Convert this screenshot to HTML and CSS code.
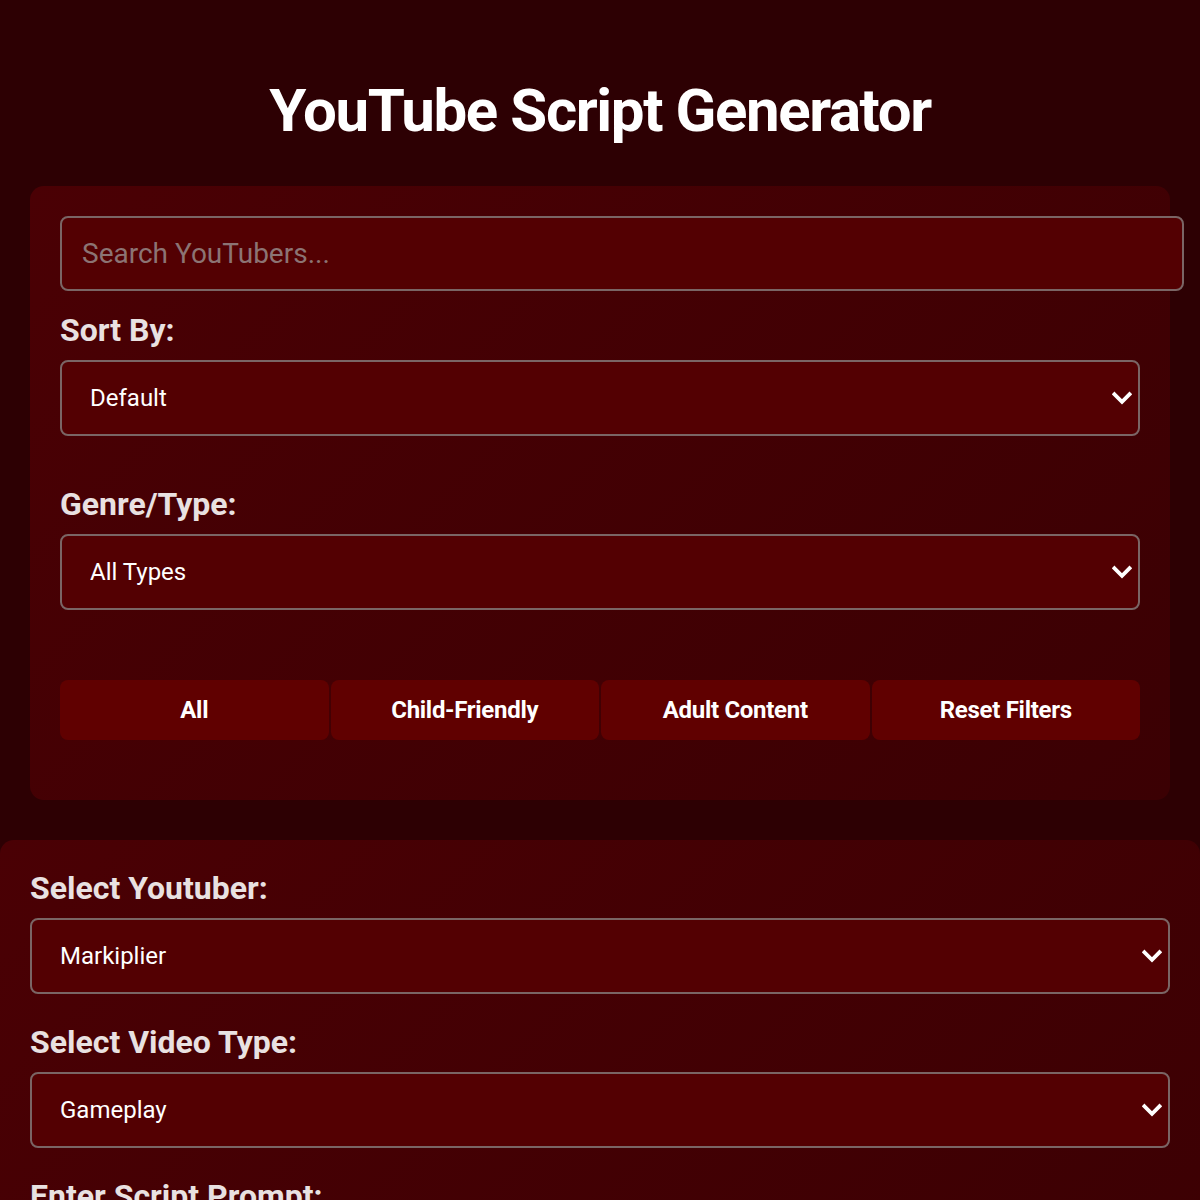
FILE: index.html
```html
<!DOCTYPE html>
<html lang="en">

<head>
    <title>YouTube Script Generator</title>
    <link rel="stylesheet" href="styles.css">
</head>

<body>
    <h1>YouTube Script Generator</h1>

    <div class="filters">
        <input type="text" class="search" placeholder="Search YouTubers...">

        <div class="field">
            <label for="sort-by">Sort By:</label>
            <div class="select-wrap">
                <select id="sort-by">
                    <option>Default</option>
                </select>
                <svg class="chevron" viewBox="0 0 16 16"><path d="M2 5l6 6 6-6" /></svg>
            </div>
        </div>

        <div class="field">
            <label for="genre">Genre/Type:</label>
            <div class="select-wrap">
                <select id="genre">
                    <option>All Types</option>
                </select>
                <svg class="chevron" viewBox="0 0 16 16"><path d="M2 5l6 6 6-6" /></svg>
            </div>
        </div>

        <div class="buttons">
            <button>All</button>
            <button>Child-Friendly</button>
            <button>Adult Content</button>
            <button>Reset Filters</button>
        </div>
    </div>

    <div class="generator">
        <div class="row">
            <label for="youtuber">Select Youtuber:</label>
            <div class="select-wrap">
                <select id="youtuber">
                    <option>Markiplier</option>
                </select>
                <svg class="chevron" viewBox="0 0 16 16"><path d="M2 5l6 6 6-6" /></svg>
            </div>
        </div>
        <div class="row">
            <label for="video-type">Select Video Type:</label>
            <div class="select-wrap">
                <select id="video-type">
                    <option>Gameplay</option>
                </select>
                <svg class="chevron" viewBox="0 0 16 16"><path d="M2 5l6 6 6-6" /></svg>
            </div>
        </div>
        <div class="row">
            <label for="prompt">Enter Script Prompt:</label>
            <textarea id="prompt" rows="4"></textarea>
        </div>
    </div>
</body>

</html>
```

FILE: styles.css
```css
* {
    margin: 0;
    padding: 0;
    box-sizing: border-box;
}

body {
    background: #2d0003;
    color: #ffffff;
    font-family: Roboto, "Liberation Sans", sans-serif;
    overflow: hidden;
}

h1 {
    text-align: center;
    font-size: 60px;
    font-weight: 700;
    letter-spacing: -1.4px;
    padding: 76px 0 40px;
    line-height: 70px;
}

.filters {
    margin: 0 30px;
    padding: 30px;
    border-radius: 14px;
    background: linear-gradient(135deg, #4a0004, #3b0003);
}

.search {
    display: block;
    width: calc(100% + 44px);
    height: 75px;
    padding: 0 20px;
    font-family: inherit;
    font-size: 28px;
    color: #ffffff;
    background: #530002;
    border: 2px solid #7a6565;
    border-radius: 8px;
    outline: none;
}

.search::placeholder {
    color: #8c7474;
}

label {
    display: block;
    font-size: 32px;
    font-weight: 700;
    color: #e9e1e1;
    line-height: 38px;
}

.field {
    margin-top: 20px;
}

.field label {
    margin-bottom: 11px;
}

.field + .field {
    margin-top: 49px;
}

.select-wrap {
    position: relative;
}

select {
    display: block;
    width: 100%;
    height: 76px;
    padding: 0 28px;
    font-family: inherit;
    font-size: 24px;
    color: #ffffff;
    background: #530002;
    border: 2px solid #7a6565;
    border-radius: 8px;
    appearance: none;
    outline: none;
}

.chevron {
    position: absolute;
    right: 8px;
    top: 28px;
    width: 20px;
    height: 20px;
    fill: none;
    stroke: #ffffff;
    stroke-width: 3;
    stroke-linecap: square;
    pointer-events: none;
}

.buttons {
    display: flex;
    gap: 2px;
    margin-top: 70px;
    margin-bottom: 30px;
}

button {
    flex: 1;
    height: 60px;
    font-family: inherit;
    font-size: 24px;
    font-weight: 700;
    letter-spacing: -0.3px;
    color: #ffffff;
    background: #600000;
    border: none;
    border-radius: 8px;
}

.generator {
    margin-top: 40px;
    padding: 29px 30px 30px;
    border-radius: 14px 14px 0 0;
    background: linear-gradient(135deg, #4a0004, #3b0003);
    min-height: 500px;
}

.row label {
    margin-bottom: 11px;
}

.row + .row {
    margin-top: 29px;
}

textarea {
    display: block;
    width: 100%;
    padding: 20px 28px;
    font-family: inherit;
    font-size: 22px;
    color: #ffffff;
    background: #530002;
    border: 2px solid #7a6565;
    border-radius: 8px;
    resize: none;
}
```
